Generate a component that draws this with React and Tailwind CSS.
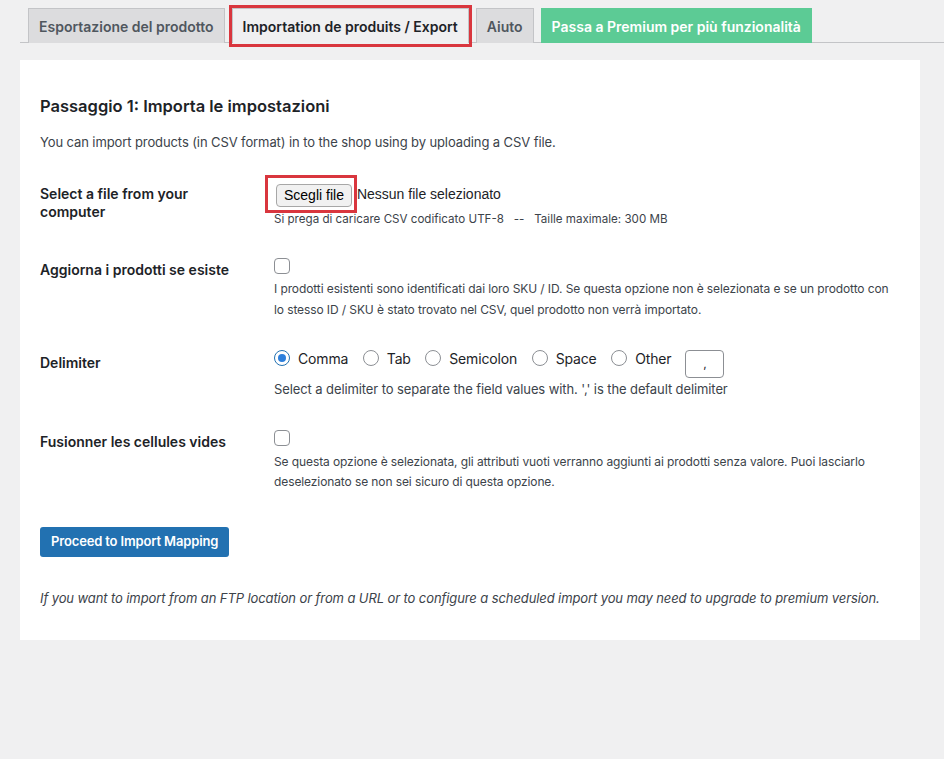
import React from 'react';

const font = { fontFamily: 'Inter, "Noto Sans", sans-serif' };

function Tab({ children, active, premium, boxed }) {
  let cls = 'h-[35px] px-[10px] flex items-center text-[14px] font-semibold border border-b-0 -mb-px';
  if (premium) cls += ' bg-[#5ccb95] border-[#5ccb95] text-white';
  else if (active) cls += ' bg-[#f0f0f1] border-[#c3c4c7] text-[#1d2327] border-b border-b-[#f0f0f1]';
  else cls += ' bg-[#dcdcde] border-[#c3c4c7] text-[#50575e]';
  const tab = <div className={cls}>{children}</div>;
  if (!boxed) return tab;
  return (
    <div className="relative">
      {tab}
      <div className="absolute -left-[3px] -right-[3px] -top-[3px] -bottom-[5px] border-[3px] border-[#d9363e] pointer-events-none" />
    </div>
  );
}

function Checkbox() {
  return <span className="block w-4 h-4 rounded-[4px] border border-[#8c8f94] bg-white" />;
}

function Radio({ label, checked }) {
  return (
    <span className="flex items-center gap-2 text-[14px] tracking-[-0.15px] text-[#1d2327]">
      {checked ? (
        <span className="w-4 h-4 rounded-full border border-[#2271b1] bg-white flex items-center justify-center">
          <span className="w-2 h-2 rounded-full bg-[#2c7fdc]" />
        </span>
      ) : (
        <span className="w-4 h-4 rounded-full border border-[#8c8f94] bg-white" />
      )}
      {label}
    </span>
  );
}

function Label({ children, className = '' }) {
  return (
    <div className={`w-[234px] shrink-0 text-[14px] leading-[18px] font-semibold text-[#1d2327] ${className}`}>
      {children}
    </div>
  );
}

export default function App() {
  return (
    <div className="min-h-[759px] bg-[#f0f0f1] pl-[20px] pt-[8px]" style={font}>
      <div className="flex gap-[7px] pl-[8px] border-b border-[#c3c4c7]">
        <Tab>Esportazione del prodotto</Tab>
        <Tab active boxed>Importation de produits / Export</Tab>
        <Tab>Aiuto</Tab>
        <Tab premium>Passa a Premium per più funzionalità</Tab>
      </div>

      <div className="mt-[17px] w-[900px] bg-white px-[20px] pt-[34px] pb-[32px] text-[#1d2327]">
        <h2 className="text-[16.5px] leading-[24px] font-semibold">Passaggio 1: Importa le impostazioni</h2>
        <p className="mt-[14px] text-[13px] leading-[20px] tracking-[-0.1px] text-[#3c434a]">
          You can import products (in CSV format) in to the shop using by uploading a CSV file.
        </p>

        <div className="flex mt-[30px]">
          <Label className="pt-[3px]">Select a file from your<br />computer</Label>
          <div>
            <div className="flex items-center">
              <div className="relative">
                <button className="h-[23px] ml-[2px] px-[7px] rounded-[4px] border border-[#a7a7a7] bg-[#f1f1f1] text-[14px] text-black" style={{ fontFamily: '"Liberation Sans", Arial, sans-serif' }}>
                  Scegli file
                </button>
                <div className="absolute -left-[9px] -right-[5px] -top-[7px] -bottom-[6px] border-[3px] border-[#d9363e] pointer-events-none" />
              </div>
              <span className="ml-[5px] text-[14px] text-[#1d2327]" style={{ fontFamily: '"Liberation Sans", Arial, sans-serif' }}>Nessun file selezionato</span>
            </div>
            <p className="mt-[4px] text-[11.6px] leading-[16px] text-[#3c434a] whitespace-pre">
              {'Si prega di caricare CSV codificato UTF-8   --   Taille maximale: 300 MB'}
            </p>
          </div>
        </div>

        <div className="flex mt-[31px]">
          <Label className="pt-[3px]">Aggiorna i prodotti se esiste</Label>
          <div>
            <Checkbox />
            <p className="mt-[4px] text-[12px] leading-[21px] tracking-[-0.1px] text-[#3c434a] w-[620px]">
              I prodotti esistenti sono identificati dai loro SKU / ID. Se questa opzione non è selezionata e se un prodotto con lo stesso ID / SKU è stato trovato nel CSV, quel prodotto non verrà importato.
            </p>
          </div>
        </div>

        <div className="flex mt-[28px]">
          <Label className="pt-[6px]">Delimiter</Label>
          <div>
            <div className="flex items-start h-[30px]">
              <div className="flex items-center gap-[14.5px] h-[20px]">
                <Radio label="Comma" checked />
                <Radio label="Tab" />
                <Radio label="Semicolon" />
                <Radio label="Space" />
                <Radio label="Other" />
              </div>
              <div className="ml-[14px] mt-[2px] w-[39px] h-[28px] rounded-[4px] border border-[#8c8f94] flex items-center justify-center text-[12px] text-[#1d2327]">
                ,
              </div>
            </div>
            <p className="mt-[1px] text-[13px] leading-[20px] tracking-[-0.1px] text-[#3c434a]">
              Select a delimiter to separate the field values with. ',' is the default delimiter
            </p>
          </div>
        </div>

        <div className="flex mt-[31px]">
          <Label className="pt-[3px]">Fusionner les cellules vides</Label>
          <div>
            <Checkbox />
            <p className="mt-[6px] text-[12px] leading-[20px] tracking-[-0.1px] text-[#3c434a] w-[620px]">
              Se questa opzione è selezionata, gli attributi vuoti verranno aggiunti ai prodotti senza valore. Puoi lasciarlo deselezionato se non sei sicuro di questa opzione.
            </p>
          </div>
        </div>

        <button className="mt-[35px] h-[30px] px-[11px] rounded-[3px] bg-[#2271b1] text-white text-[13px] tracking-[-0.15px] font-semibold">
          Proceed to Import Mapping
        </button>

        <p className="mt-[31px] text-[13px] leading-[20px] tracking-[-0.1px] italic text-[#3c434a]">
          If you want to import from an FTP location or from a URL or to configure a scheduled import you may need to upgrade to premium version.
        </p>
      </div>
    </div>
  );
}
